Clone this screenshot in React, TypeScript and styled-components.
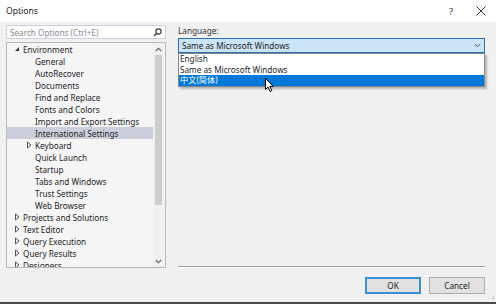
import React from 'react';
import styled, { createGlobalStyle } from 'styled-components';

const GlobalStyle = createGlobalStyle`
  html, body {
    margin: 0;
    padding: 0;
    width: 496px;
    height: 304px;
    overflow: hidden;
    background: #f0f0f0;
  }
  * { box-sizing: border-box; }
`;

const Dialog = styled.div`
  width: 496px;
  height: 304px;
  display: flex;
  flex-direction: column;
  background: #f0f0f0;
  border-bottom: 2px solid #4a4a4a;
  font-family: 'Noto Sans', 'Noto Sans CJK TC', sans-serif;
  font-size: 8.2px;
  color: #1e1e1e;
`;

const TitleBar = styled.div`
  height: 22px;
  flex: none;
  display: flex;
  align-items: center;
  background: #ffffff;
  padding-left: 6px;
`;

const Title = styled.div`
  flex: 1;
  font-size: 8.6px;
  color: #222;
`;

const TitleButton = styled.div`
  width: 30px;
  height: 22px;
  display: flex;
  align-items: center;
  justify-content: center;
  color: #333;
  font-size: 9.5px;
`;

const Body = styled.div`
  flex: 1;
  display: flex;
  gap: 12px;
  padding: 3px 11px 0 6px;
  min-height: 0;
`;

const LeftCol = styled.div`
  width: 160px;
  display: flex;
  flex-direction: column;
  gap: 3px;
`;

const Search = styled.div`
  height: 14px;
  flex: none;
  display: flex;
  align-items: center;
  background: #fff;
  border: 1px solid #cccedb;
  padding: 0 3px 0 3px;
  color: #8a8a8a;
`;

const SearchText = styled.span`
  flex: 1;
`;

const Tree = styled.div`
  flex: 1;
  display: flex;
  background: #f5f5f5;
  border: 1px solid #b9b9b9;
  overflow: hidden;
`;

const TreeList = styled.div`
  flex: 1;
`;

const Row = styled.div<{ $level: number; $selected?: boolean }>`
  height: 12px;
  display: flex;
  align-items: center;
  padding-left: ${(p) => (p.$level === 0 ? 4 : 16)}px;
  background: ${(p) => (p.$selected ? '#cccedb' : 'transparent')};
  white-space: nowrap;
`;

const Toggle = styled.span`
  width: 12px;
  display: inline-flex;
  align-items: center;
  justify-content: flex-start;
  padding-left: 3px;
`;

const ScrollBar = styled.div`
  width: 11px;
  display: flex;
  flex-direction: column;
  align-items: center;
  background: #f0f0f0;
  margin: 0 1px 0 0;
`;

const ScrollArrow = styled.div`
  height: 12px;
  display: flex;
  align-items: center;
  justify-content: center;
`;

const Thumb = styled.div`
  width: 7px;
  height: 150px;
  background: #cdcdcd;
`;

const RightCol = styled.div`
  flex: 1;
  display: flex;
  flex-direction: column;
  position: relative;
`;

const Label = styled.div`
  height: 12px;
  line-height: 12px;
  color: #333;
`;

const Combo = styled.div`
  margin-top: 1px;
  height: 15px;
  display: flex;
  align-items: center;
  padding: 0 3px;
  background: #cce4f7;
  border: 1px solid #2a6db0;
`;

const ComboText = styled.span`
  flex: 1;
`;

const DropList = styled.div`
  position: absolute;
  top: 28px;
  left: 0;
  width: 307px;
  background: #fff;
  border: 1px solid #828790;
  box-shadow: 2px 2px 2px rgba(0, 0, 0, 0.25);
  z-index: 2;
`;

const Option = styled.div<{ $selected?: boolean }>`
  height: 10.5px;
  line-height: 10.5px;
  padding-left: 1px;
  background: ${(p) => (p.$selected ? '#0078d7' : 'transparent')};
  color: ${(p) => (p.$selected ? '#fff' : '#1e1e1e')};
  white-space: nowrap;
`;

const Cursor = styled.svg`
  position: absolute;
  left: 87px;
  top: 53px;
  z-index: 3;
`;

const Spacer = styled.div`
  flex: 1;
`;

const Separator = styled.div`
  height: 2px;
  border-top: 1px solid #a0a0a0;
  border-bottom: 1px solid #ffffff;
`;

const Footer = styled.div`
  height: 34px;
  flex: none;
  display: flex;
  justify-content: flex-end;
  align-items: flex-start;
  gap: 8px;
  padding: 9px 11px 0 0;
  position: relative;
`;

const Button = styled.div<{ $default?: boolean }>`
  width: 56px;
  height: 17px;
  display: flex;
  align-items: center;
  justify-content: center;
  background: #e1e1e1;
  border: ${(p) => (p.$default ? '2px solid #3c8fd6' : '1px solid #adadad')};
  color: #1e1e1e;
`;

const Grip = styled.svg`
  position: absolute;
  right: 1px;
  bottom: 1px;
`;

const Expanded = () => (
  <svg width="6" height="6" viewBox="0 0 6 6">
    <path d="M5 1 L5 5 L1 5 Z" fill="#333" />
  </svg>
);

const Collapsed = () => (
  <svg width="6" height="8" viewBox="0 0 6 8">
    <path d="M1.5 1 L5 4 L1.5 7 Z" fill="none" stroke="#555" strokeWidth="1" />
  </svg>
);

type Node = { label: string; level: number; toggle?: 'open' | 'closed'; selected?: boolean };

const nodes: Node[] = [
  { label: 'Environment', level: 0, toggle: 'open' },
  { label: 'General', level: 1 },
  { label: 'AutoRecover', level: 1 },
  { label: 'Documents', level: 1 },
  { label: 'Find and Replace', level: 1 },
  { label: 'Fonts and Colors', level: 1 },
  { label: 'Import and Export Settings', level: 1 },
  { label: 'International Settings', level: 1, selected: true },
  { label: 'Keyboard', level: 1, toggle: 'closed' },
  { label: 'Quick Launch', level: 1 },
  { label: 'Startup', level: 1 },
  { label: 'Tabs and Windows', level: 1 },
  { label: 'Trust Settings', level: 1 },
  { label: 'Web Browser', level: 1 },
  { label: 'Projects and Solutions', level: 0, toggle: 'closed' },
  { label: 'Text Editor', level: 0, toggle: 'closed' },
  { label: 'Query Execution', level: 0, toggle: 'closed' },
  { label: 'Query Results', level: 0, toggle: 'closed' },
  { label: 'Designers', level: 0, toggle: 'closed' },
];

export default function App() {
  return (
    <>
      <GlobalStyle />
      <Dialog>
        <TitleBar>
          <Title>Options</Title>
          <TitleButton>?</TitleButton>
          <TitleButton>
            <svg width="10" height="10" viewBox="0 0 10 10">
              <path d="M0.5 0.5 L9.5 9.5 M9.5 0.5 L0.5 9.5" stroke="#333" strokeWidth="1" />
            </svg>
          </TitleButton>
        </TitleBar>
        <Body>
          <LeftCol>
            <Search>
              <SearchText>Search Options (Ctrl+E)</SearchText>
              <svg width="9" height="9" viewBox="0 0 9 9">
                <circle cx="5.5" cy="3.5" r="2.6" fill="none" stroke="#333" strokeWidth="1.1" />
                <path d="M3.6 5.4 L1 8" stroke="#333" strokeWidth="1.4" />
              </svg>
            </Search>
            <Tree>
              <TreeList>
                {nodes.map((n) => (
                  <Row key={n.label} $level={n.level} $selected={n.selected}>
                    <Toggle>
                      {n.toggle === 'open' && <Expanded />}
                      {n.toggle === 'closed' && <Collapsed />}
                    </Toggle>
                    {n.label}
                  </Row>
                ))}
              </TreeList>
              <ScrollBar>
                <ScrollArrow>
                  <svg width="7" height="5" viewBox="0 0 7 5">
                    <path d="M0.8 4 L3.5 1.2 L6.2 4" fill="none" stroke="#606060" strokeWidth="1.1" />
                  </svg>
                </ScrollArrow>
                <Thumb />
                <Spacer />
                <ScrollArrow>
                  <svg width="7" height="5" viewBox="0 0 7 5">
                    <path d="M0.8 1 L3.5 3.8 L6.2 1" fill="none" stroke="#606060" strokeWidth="1.1" />
                  </svg>
                </ScrollArrow>
              </ScrollBar>
            </Tree>
          </LeftCol>
          <RightCol>
            <Label>Language:</Label>
            <Combo>
              <ComboText>Same as Microsoft Windows</ComboText>
              <svg width="7" height="5" viewBox="0 0 7 5">
                <path d="M0.8 1 L3.5 3.8 L6.2 1" fill="none" stroke="#555" strokeWidth="1" />
              </svg>
            </Combo>
            <DropList>
              <Option>English</Option>
              <Option>Same as Microsoft Windows</Option>
              <Option $selected>中文(简体)</Option>
            </DropList>
            <Cursor width="10" height="15" viewBox="0 0 10 15">
              <path d="M0.5 0.5 L0.5 11.5 L3 9 L5 13.5 L6.8 12.7 L4.8 8.4 L8.3 8.4 Z" fill="#fff" stroke="#000" strokeWidth="1" />
            </Cursor>
            <Spacer />
            <Separator />
          </RightCol>
        </Body>
        <Footer>
          <Button $default>OK</Button>
          <Button>Cancel</Button>
          <Grip width="5" height="5" viewBox="0 0 5 5">
            <rect x="3" y="0" width="1" height="1" fill="#aaa" />
            <rect x="1.5" y="2" width="1" height="1" fill="#aaa" />
            <rect x="3" y="2" width="1" height="1" fill="#aaa" />
          </Grip>
        </Footer>
      </Dialog>
    </>
  );
}
